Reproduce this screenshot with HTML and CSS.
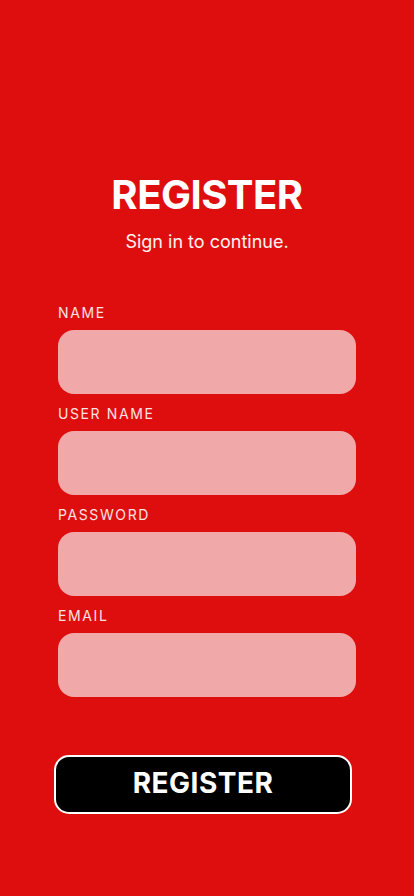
FILE: index.html
```html
<!DOCTYPE html>
<html lang="en">
<head>
<meta charset="utf-8">
<meta name="viewport" content="width=device-width, initial-scale=1">
<title>Register</title>
<link rel="stylesheet" href="styles.css">
</head>
<body>
<main class="screen">
  <header class="head">
    <h1 class="title">REGISTER</h1>
    <p class="subtitle">Sign in to continue.</p>
  </header>
  <form class="form">
    <div class="field">
      <label class="label" for="name">NAME</label>
      <input class="input" id="name" type="text">
    </div>
    <div class="field">
      <label class="label" for="user">USER NAME</label>
      <input class="input" id="user" type="text">
    </div>
    <div class="field">
      <label class="label" for="pass">PASSWORD</label>
      <input class="input" id="pass" type="password">
    </div>
    <div class="field">
      <label class="label" for="email">EMAIL</label>
      <input class="input" id="email" type="email">
    </div>
    <button class="button" type="button">REGISTER</button>
  </form>
</main>
</body>
</html>
```
FILE: styles.css
```css
html, body {
  margin: 0;
  padding: 0;
  background: #df0e0e;
}
.screen {
  width: 414px;
  height: 896px;
  box-sizing: border-box;
  display: flex;
  flex-direction: column;
  align-items: center;
  padding-top: 171px;
  font-family: Inter, "Noto Sans", sans-serif;
  color: #ffffff;
}
.head {
  display: flex;
  flex-direction: column;
  align-items: center;
}
.title {
  margin: 0;
  font-size: 40px;
  line-height: 48px;
  font-weight: 700;
  letter-spacing: -0.5px;
}
.subtitle {
  margin: 11px 0 0;
  font-size: 18px;
  line-height: 24px;
  font-weight: 400;
  color: #fff3f3;
}
.form {
  margin-top: 49px;
  width: 298px;
  display: flex;
  flex-direction: column;
  gap: 10px;
}
.field {
  display: flex;
  flex-direction: column;
  gap: 7px;
}
.label {
  font-size: 14px;
  line-height: 20px;
  letter-spacing: 1.6px;
  color: #fbe3e3;
}
.input {
  height: 64px;
  border: 0;
  border-radius: 16px;
  background: #f1a8a8;
  margin: 0;
  padding: 0 16px;
  box-sizing: border-box;
  outline: none;
}
.button {
  margin-top: 48px;
  margin-left: -4px;
  width: 298px;
  height: 59px;
  box-sizing: border-box;
  border: 2px solid #ffffff;
  border-radius: 15px;
  background: #000000;
  color: #ffffff;
  font-family: Inter, "Noto Sans", sans-serif;
  font-size: 28px;
  line-height: 32px;
  font-weight: 700;
  letter-spacing: 0.5px;
  padding: 0 0 3px;
  cursor: pointer;
}
```
